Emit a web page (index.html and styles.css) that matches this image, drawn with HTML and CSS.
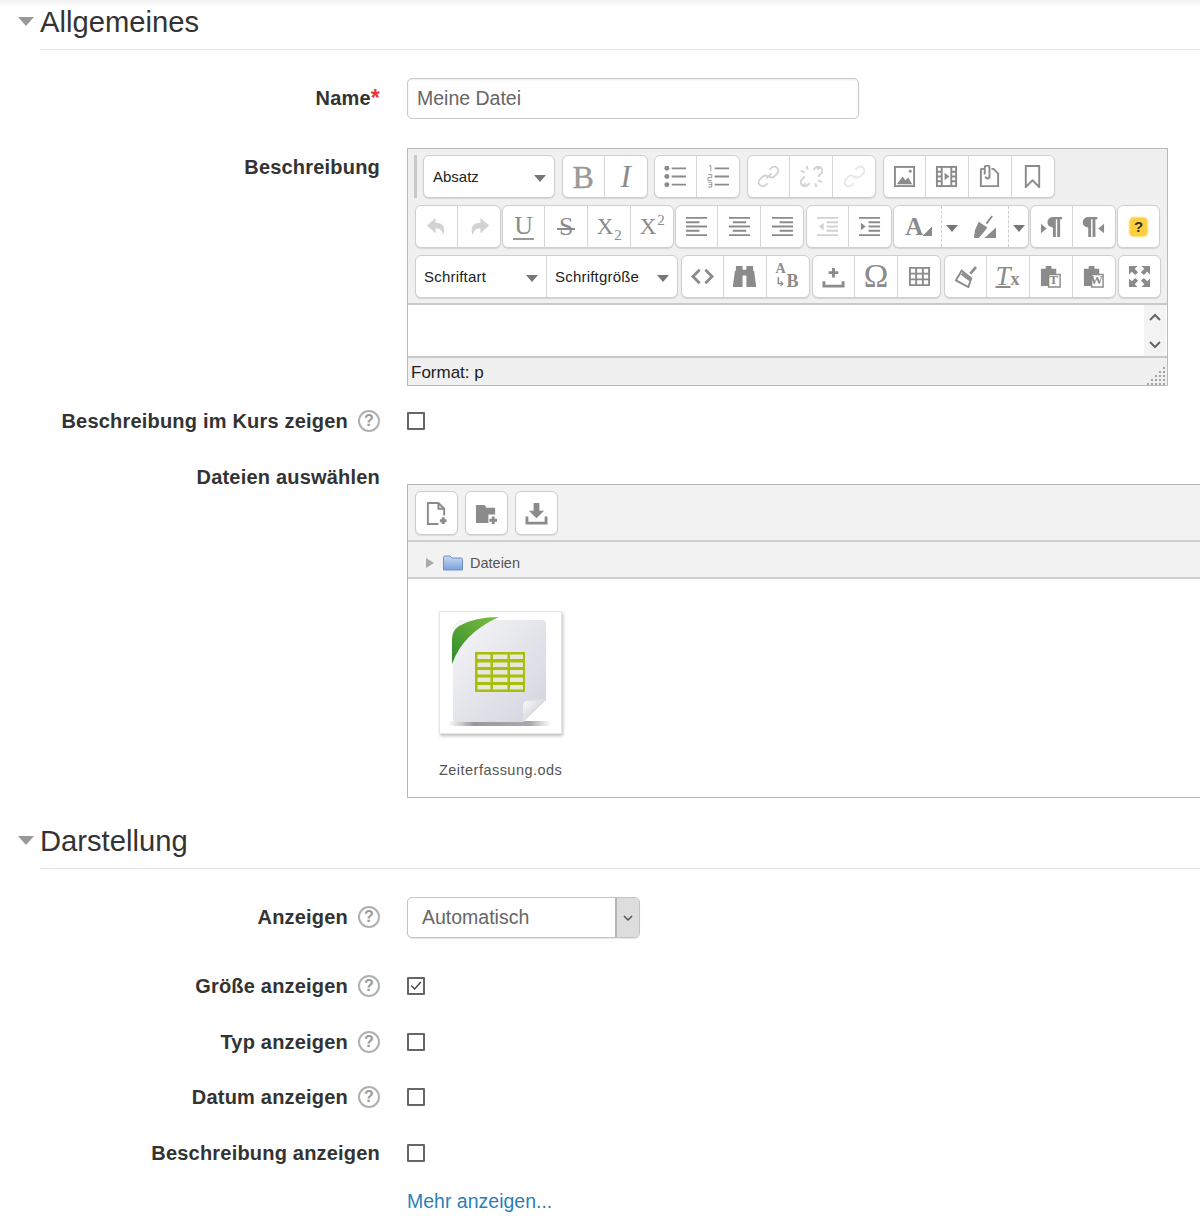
FILE: index.html
```html
<!DOCTYPE html>
<html lang="de">
<head>
<meta charset="utf-8">
<title>Datei</title>
<link rel="stylesheet" href="styles.css">
</head>
<body>
<section class="sec-head"><span class="tri"></span><h2>Allgemeines</h2></section>

<div class="row r-name">
  <div class="lbl p6">Name<span class="req">*</span></div>
  <div class="input">Meine Datei</div>
</div>

<div class="row r-editor">
  <div class="lbl p5">Beschreibung</div>
  <div class="editor">
    <div class="toolbar">
      <div class="tbrow tb1">
        <span class="handle"></span>
        <div class="grp"><div class="drop w130 a10">Absatz<i class="caret"></i></div></div>
        <div class="grp">
          <div class="btn"><span class="g-b">B</span></div>
          <div class="btn"><span class="g-i">I</span></div>
        </div>
        <div class="grp">
          <div class="btn"><svg class="ic" viewBox="0 0 24 24"><circle cx="3" cy="3.5" r="2.6"/><circle cx="3" cy="12" r="2.6"/><circle cx="3" cy="20.5" r="2.6"/><path class="ln" d="M8 3.5h15M8 12h15M8 20.5h15"/></svg></div>
          <div class="btn"><svg class="ic" viewBox="0 0 24 24"><path class="th" d="M2 1l2-.5v6M1 10h4v3H1v3h4M1 18h4v5H1M2 20.500h3"/><path class="ln" d="M8 3.500h15M8 12h15M8 20.500h15"/></svg></div>
        </div>
        <div class="grp off">
          <div class="btn"><svg class="ic" viewBox="0 0 24 24"><path class="ln2" d="M10 14l5-5M13 5l2-2a4 4 0 0 1 6 6l-3 3a4 4 0 0 1-5 0M11 19l-2 2a4 4 0 0 1-6-6l3-3a4 4 0 0 1 5 0"/></svg></div>
          <div class="btn"><svg class="ic" viewBox="0 0 24 24"><path class="ln2" d="M14 5l2-2a4 4 0 0 1 6 6l-3 3M10 19l-2 2a4 4 0 0 1-6-6l3-3M1 6l4 2M7 1l1 4M23 18l-4-2M17 23l-1-4M3 22l3-3M21 2l-3 3"/></svg></div>
          <div class="btn lighter"><svg class="ic" viewBox="0 0 24 24"><path class="ln2" d="M13 5l2-2a4 4 0 0 1 6 6l-3 3a4 4 0 0 1-5 0l-2 2M11 19l-2 2a4 4 0 0 1-6-6l3-3a4 4 0 0 1 5 0"/></svg></div>
        </div>
        <div class="grp">
          <div class="btn"><svg class="ic" viewBox="0 0 24 24"><rect class="ln" x="2" y="2" width="20" height="20"/><path d="M4 20l6-8 3 4 3-3 4 7z"/><circle cx="18" cy="6.500" r="1.500"/></svg></div>
          <div class="btn"><svg class="ic" viewBox="0 0 24 24"><rect class="ln" x="2" y="2" width="20" height="20"/><path class="ln" d="M7 2v20M17 2v20M2 7h5M2 12h5M2 17h5M17 7h5M17 12h5M17 17h5"/><path d="M10 8l5 4-5 4z"/></svg></div>
          <div class="btn"><svg class="ic" viewBox="0 0 24 24"><path class="ln2" d="M3 4h3M14 4h2l5 5v13H3V4M7 10V3a2 2 0 0 1 5 0v9a2 2 0 0 1-4 0"/></svg></div>
          <div class="btn"><svg class="ic" viewBox="0 0 24 24"><path class="ln2" d="M5 1h14v22l-7-7-7 7z"/></svg></div>
        </div>
      </div>
      <div class="tbrow tb2">
        <div class="grp off">
          <div class="btn"><svg class="ic" viewBox="0 0 24 24"><path d="M11 3L2 11l9 8v-5c5 0 7 2 8 7 3-8 0-13-8-13z"/></svg></div>
          <div class="btn"><svg class="ic" viewBox="0 0 24 24"><path d="M13 3l9 8-9 8v-5c-5 0-7 2-8 7-3-8 0-13 8-13z"/></svg></div>
        </div>
        <div class="grp">
          <div class="btn"><span class="g-u">U</span></div>
          <div class="btn"><span class="g-s">S</span></div>
          <div class="btn"><span class="g-x">X<sub>2</sub></span></div>
          <div class="btn"><span class="g-x">X<sup>2</sup></span></div>
        </div>
        <div class="grp">
          <div class="btn"><svg class="ic" viewBox="0 0 24 24"><path class="ln" d="M1 3h22M1 7.500h14M1 12h22M1 16.500h14M1 21h22"/></svg></div>
          <div class="btn"><svg class="ic" viewBox="0 0 24 24"><path class="ln" d="M1 3h22M5 7.500h14M1 12h22M5 16.500h14M1 21h22"/></svg></div>
          <div class="btn"><svg class="ic" viewBox="0 0 24 24"><path class="ln" d="M1 3h22M9 7.500h14M1 12h22M9 16.500h14M1 21h22"/></svg></div>
        </div>
        <div class="grp">
          <div class="btn off"><svg class="ic" viewBox="0 0 24 24"><path class="ln" d="M1 3h22M11 7.500h12M11 12h12M11 16.500h12M1 21h22"/><path d="M8 8v8l-5-4z"/></svg></div>
          <div class="btn"><svg class="ic" viewBox="0 0 24 24"><path class="ln" d="M1 3h22M11 7.500h12M11 12h12M11 16.500h12M1 21h22"/><path d="M3 8v8l5-4z"/></svg></div>
        </div>
        <div class="grp">
          <div class="btn w47"><span class="g-a">A</span><svg class="corner" viewBox="0 0 10 10"><path d="M10 0v10H0z"/></svg></div>
          <div class="split"><i class="caret"></i></div>
          <div class="btn w47 nosep"><svg class="ic" viewBox="0 0 24 24"><path class="ln" d="M14 9l6-8"/><path d="M1 24l1-8 4-9 9 6-3 4-6 7zM24 13v11H12z"/></svg></div>
          <div class="split"><i class="caret"></i></div>
        </div>
        <div class="grp">
          <div class="btn"><svg class="ic" viewBox="0 0 24 24"><path d="M1 9l6 5-6 5zM13 2h10v2.500h-2V23h-3V4.500h-1.500V23h-3V13a5.500 5.500 0 0 1 -.5-11z"/></svg></div>
          <div class="btn"><svg class="ic" viewBox="0 0 24 24"><path d="M23 9l-6 5 6 5zM6 2h10v2.500h-2V23h-3V4.500H9.500V23h-3V13a5.500 5.500 0 0 1-.5-11z"/></svg></div>
        </div>
        <div class="grp">
          <div class="btn"><span class="helpq">?</span></div>
        </div>
      </div>
      <div class="tbrow tb3">
        <div class="grp">
          <div class="drop w130 a9">Schriftart<i class="caret"></i></div>
          <div class="drop w131 a9 sep">Schriftgröße<i class="caret"></i></div>
        </div>
        <div class="grp">
          <div class="btn"><svg class="ic" viewBox="0 0 24 24"><path class="ln3" d="M9 5l-7 7 7 7M15 5l7 7-7 7"/></svg></div>
          <div class="btn"><svg class="ic" viewBox="0 0 24 24"><path d="M3 1h7v4h4V1h7v5h1l2 15v2H14V11h-4v12H0v-2L2 6h1z"/></svg></div>
          <div class="btn"><span class="g-ab"><b class="up">A</b><b class="arr">↳</b><b class="dn">B</b></span></div>
        </div>
        <div class="grp">
          <div class="btn"><svg class="ic" viewBox="0 0 24 24"><path class="ln3" d="M12 3v10M7 8h10"/><path class="ln3" d="M2 17v5h20v-5"/></svg></div>
          <div class="btn"><span class="g-o">Ω</span></div>
          <div class="btn"><svg class="ic" viewBox="0 0 24 24"><path class="ln" d="M2 3h20v18H2zM2 9h20M2 15h20M8.500 3v18M15.500 3v18"/></svg></div>
        </div>
        <div class="grp">
          <div class="btn"><svg class="ic" viewBox="0 0 24 24"><path d="M16 8l6-7 2 2-6 7z"/><path class="ln2" d="M8 6l10 8-3 9L2 16z"/><path d="M9 8l8 6-1 3-9-7z"/></svg></div>
          <div class="btn"><span class="g-tx"><em>T</em><small>x</small></span></div>
          <div class="btn"><svg class="ic" viewBox="0 0 24 24"><path d="M2 4h5V1h6v3h5v6h-7v12H2z"/><path class="pap" d="M10 10h12v13H10z"/></svg><span class="pl">T</span></div>
          <div class="btn"><svg class="ic" viewBox="0 0 24 24"><path d="M2 4h5V1h6v3h5v6h-7v12H2z"/><path class="pap" d="M10 10h12v13H10z"/></svg><span class="pl">W</span></div>
        </div>
        <div class="grp">
          <div class="btn"><svg class="ic" viewBox="0 0 24 24"><path d="M1 1h9L7 4l3.500 3.500-3 3L4 7 1 10zM23 1v9l-3-3-3.500 3.500-3-3L17 4l-3-3zM1 23v-9l3 3 3.500-3.500 3 3L7 20l3 3zM23 23h-9l3-3-3.500-3.500 3-3L20 17l3-3z"/></svg></div>
        </div>
      </div>
    </div>
    <div class="ed-body">
      <div class="scroll">
        <svg class="chev" viewBox="0 0 12 8"><path d="M1 7l5-5 5 5"/></svg>
        <svg class="chev" viewBox="0 0 12 8"><path d="M1 1l5 5 5-5"/></svg>
      </div>
    </div>
    <div class="status">Format: p
      <svg class="grip" viewBox="0 0 20 20"><path d="M16 2h2v2h-2zM16 6h2v2h-2zM12 6h2v2h-2zM16 10h2v2h-2zM12 10h2v2h-2zM8 10h2v2H8zM16 14h2v2h-2zM12 14h2v2h-2zM8 14h2v2H8zM4 14h2v2H4zM16 18h2v2h-2zM12 18h2v2h-2zM8 18h2v2H8zM4 18h2v2H4zM0 18h2v2H0z"/></svg>
    </div>
  </div>
</div>

<div class="row r-show">
  <div class="lbl help">Beschreibung im Kurs zeigen<span class="q">?</span></div>
  <div class="ctl"><span class="check"></span></div>
</div>

<div class="row r-files">
  <div class="lbl">Dateien auswählen</div>
  <div class="fm">
    <div class="fm-tools">
      <div class="fbtn"><svg class="ic" viewBox="0 0 24 24"><path class="ln2" d="M14 23H3V1h11l6 6v7M14 1v6h6"/><path class="ln3" d="M19 16v7M15.500 19.500h7"/></svg></div>
      <div class="fbtn"><svg class="ic" viewBox="0 0 24 24"><path d="M1 3h9l2 3h9v7h-7v9H1z"/><path class="ln3" d="M19 15v8M15 19h8"/></svg></div>
      <div class="fbtn"><svg class="ic" viewBox="0 0 24 24"><path d="M9 1h6v8h5l-8 8-8-8h5z"/><path class="ln3" d="M2 15v7h20v-7"/></svg></div>
    </div>
    <div class="fm-path">
      <i class="pathtri"></i>
      <svg class="folder" viewBox="0 0 20 16"><defs><linearGradient id="fg" x1="0" y1="0" x2="0" y2="1"><stop offset="0" stop-color="#c9dbf5"/><stop offset="1" stop-color="#7c9fdc"/></linearGradient></defs><path fill="url(#fg)" stroke="#6f90c9" d="M.5 2.500Q.5 1 2 1h5l2 2h9q1.500 0 1.500 1.500V15H.5z"/></svg>
      <span>Dateien</span>
    </div>
    <div class="fm-body">
      <div class="file">
        <div class="thumb">
          <svg class="doc" viewBox="0 0 115 115">
            <defs>
              <linearGradient id="dg" x1="0" y1="0" x2="1" y2="1"><stop offset="0" stop-color="#f6f6f8"/><stop offset="1" stop-color="#d2d4de"/></linearGradient>
              <linearGradient id="rg" x1="0" y1="1" x2="1" y2="0"><stop offset="0" stop-color="#2f8a2c"/><stop offset="1" stop-color="#7fbf3f"/></linearGradient>
              <linearGradient id="cg" x1="0" y1="0" x2="1" y2="1"><stop offset="0" stop-color="#fff"/><stop offset="1" stop-color="#b9bbc2"/></linearGradient>
              <linearGradient id="sg" x1="0" y1="0" x2="1" y2="0"><stop offset="0" stop-color="#fff"/><stop offset=".25" stop-color="#999"/><stop offset=".8" stop-color="#aaa"/><stop offset="1" stop-color="#fff"/></linearGradient>
            </defs>
            <path fill="url(#sg)" d="M5 106h103v5H5z"/>
            <path fill="url(#dg)" d="M16 5h83q4 0 4 4v76l-23 22H14q-4 0-4-4V11z"/>
            <path fill="url(#rg)" d="M9 49V24Q9 16 16 11 32 2 56 2 20 18 9 49z"/>
            <path fill="url(#cg)" d="M80 107V91q0-5 5-5q10 0 18-3z"/>
            <rect x="32" y="37" width="50" height="40" fill="#a5bf0a"/>
            <g fill="#e6e8dc">
              <path d="M34.500 39.500h13v4.500h-13zM50 39.500h14.500v4.500H50zM67 39.500h13v4.500H67zM34.500 47.500h13v4.500h-13zM50 47.500h14.500v4.500H50zM67 47.500h13v4.500H67zM34.500 55h13v4.500h-13zM50 55h14.500v4.500H50zM67 55h13v4.500H67zM34.500 62.500h13v4.500h-13zM50 62.500h14.500v4.500H50zM67 62.500h13v4.500H67zM34.500 70h13v4.500h-13zM50 70h14.500v4.500H50zM67 70h13v4.500H67z"/>
            </g>
          </svg>
        </div>
        <div class="fname">Zeiterfassung.ods</div>
      </div>
    </div>
  </div>
</div>

<section class="sec-head sh2"><span class="tri"></span><h2>Darstellung</h2></section>

<div class="row r-disp">
  <div class="lbl p6 help">Anzeigen<span class="q">?</span></div>
  <div class="select"><span class="sel-txt">Automatisch</span><span class="sel-arrow"><svg viewBox="0 0 12 8"><path d="M2 2l4 4 4-4"/></svg></span></div>
</div>
<div class="row r-size">
  <div class="lbl help">Größe anzeigen<span class="q">?</span></div>
  <div class="ctl"><span class="check"><svg viewBox="0 0 16 16"><path d="M2.500 7.500l4 4 7-8"/></svg></span></div>
</div>
<div class="row r-type">
  <div class="lbl help">Typ anzeigen<span class="q">?</span></div>
  <div class="ctl"><span class="check"></span></div>
</div>
<div class="row r-date">
  <div class="lbl help">Datum anzeigen<span class="q">?</span></div>
  <div class="ctl"><span class="check"></span></div>
</div>
<div class="row r-desc">
  <div class="lbl">Beschreibung anzeigen</div>
  <div class="ctl"><span class="check"></span></div>
</div>
<div class="row r-more">
  <div></div>
  <a class="more" href="#">Mehr anzeigen...</a>
</div>
</body>
</html>
```
FILE: styles.css
```css
* { box-sizing: border-box; }
html, body { margin: 0; padding: 0; }
body {
  width: 1200px;
  height: 1225px;
  overflow: hidden;
  font-family: "Liberation Sans", Arial, sans-serif;
  color: #333;
  background: linear-gradient(#f1f1f1, #fff 7px) no-repeat #fff;
}

.sec-head { display: flex; padding-left: 18px; }
.sh2 { margin-top: 21px; }
.tri {
  flex: none; width: 0; height: 0; margin-top: 17px; margin-right: 6px;
  border-left: 8.5px solid transparent;
  border-right: 8.5px solid transparent;
  border-top: 9px solid #999;
}
.sec-head h2 {
  flex: 1; margin: 0; height: 50px;
  font-size: 29.200px; font-weight: 400; line-height: 44px;
  color: #333;
  border-bottom: 1px solid #e5e5e5;
}

.row { display: grid; grid-template-columns: 380px 1fr; column-gap: 27px; align-items: start; }
.lbl {
  text-align: right; font-weight: 700; font-size: 20px; line-height: 28px;
  letter-spacing: .2px; color: #333;
  display: flex; justify-content: flex-end; align-items: center;
}
.p5 { padding-top: 5px; }
.p6 { padding-top: 6px; }
.req { color: #e33; font-weight: 700; font-size: 23px; line-height: 20px; }
.q {
  width: 22px; height: 22px; margin-left: 10px;
  border: 2px solid #b0b0b0; border-radius: 50%;
  color: #9a9a9a; font-size: 16px; line-height: 18px; font-weight: 700;
  text-align: center; letter-spacing: 0;
}

.r-name { margin-top: 28px; }
.r-editor { margin-top: 29px; }
.r-show { margin-top: 21px; }
.r-files { margin-top: 28px; }
.r-disp { margin-top: 28px; }
.r-size { margin-top: 34px; }
.r-type { margin-top: 28px; }
.r-date { margin-top: 27px; }
.r-desc { margin-top: 28px; }
.r-more { margin-top: 20px; }

.input {
  width: 452px; height: 41px; padding-left: 9px;
  border: 1px solid #c8c8c8; border-radius: 5px;
  box-shadow: inset 0 1px 2px rgba(0,0,0,.08);
  font-size: 19.500px; line-height: 39px; color: #666;
}

.editor { width: 761px; border: 1px solid #b9b9b9; background: #f0f0f0; }
.toolbar { height: 156px; padding: 6px 0 0 7px; border-bottom: 2px solid #c9c9c9; }
.tbrow { display: flex; height: 43px; margin-bottom: 7px; }
.tb1 { gap: 6.700px; }
.tb2 { gap: 1.200px; }
.tb3 { gap: 2.500px; }
.handle { width: 3px; height: 43px; background: #c9c9c9; margin-left: -1px; margin-right: -.7px; }

.grp {
  display: flex; height: 43px;
  background: #fff; border: 1px solid #cfcfcf; border-radius: 6px;
  box-shadow: 0 1px 1px rgba(0,0,0,.12);
}
.btn {
  position: relative; width: 43px; height: 100%;
  display: flex; align-items: center; justify-content: center;
  border-left: 1px solid #d6d6d6; color: #8b8b8b; fill: #8b8b8b; stroke: #8b8b8b;
}
.btn:first-child, .nosep { border-left: 0; }
.btn:first-child { width: 41px; }
.btn.w47 { width: 47px; }
.off .btn, .btn.off { color: #d2d2d2; fill: #d2d2d2; stroke: #d2d2d2; }
.off .btn.lighter { color: #e8e8e8; fill: #e8e8e8; stroke: #e8e8e8; }

.ic { width: 23px; height: 23px; stroke-width: 0; }
.ln { fill: none; stroke-width: 2; }
.ln2 { fill: none; stroke-width: 2; }
.ln3 { fill: none; stroke-width: 3; }
.th { fill: none; stroke-width: .9; }

.drop {
  position: relative; height: 100%;
  font-size: 15px; line-height: 41px; color: #222;
}
.w130 { width: 130px; }
.w131 { width: 131px; }
.a10 { padding-left: 9px; }
.a9 { padding-left: 8px; letter-spacing: .2px; }
.sep { border-left: 1px solid #d6d6d6; }
.caret {
  position: absolute; right: 8px; top: 19px; width: 0; height: 0;
  border-left: 6.500px solid transparent; border-right: 6.500px solid transparent;
  border-top: 7px solid #777;
}
.split { position: relative; width: 20px; border-left: 1px dashed #ccc; }
.split .caret { right: 3px; }

.g-b, .g-i, .g-u, .g-s, .g-x, .g-o, .g-a, .g-tx em {
  font-family: "Liberation Serif", "Times New Roman", serif;
}
.g-b { font-size: 32px; font-weight: 400; color: #999; line-height: 1; -webkit-text-stroke: .4px #999; }
.g-i { font-size: 31px; font-style: italic; line-height: 1; }
.g-u { font-size: 26px; line-height: 24px; border-bottom: 2px solid #999; padding: 0 1px; }
.g-s {
  font-size: 26px; line-height: 26px;
  background: linear-gradient(#8b8b8b, #8b8b8b) center 62% / 100% 2px no-repeat;
  padding: 0 2px;
}
.g-x { font-size: 23px; line-height: 1; }
.g-x sub, .g-x sup { font-size: 15px; line-height: 0; margin-left: 1px; }
.g-a { font-size: 25px; font-weight: 700; margin-right: 6px; }
.corner { position: absolute; right: 9px; bottom: 11px; width: 9px; height: 9px; }
.g-o { font-size: 33px; line-height: 1; }
.helpq {
  width: 17px; height: 18px; border-radius: 4px;
  background: #fbcf3d; box-shadow: 0 0 2px 1px #f8d772;
  color: #333; font-weight: 700; font-size: 15px; line-height: 18px; text-align: center;
}
.g-ab { position: relative; width: 24px; height: 26px; font-family: "Liberation Serif", serif; }
.g-ab b { position: absolute; font-weight: 700; line-height: 1; }
.g-ab .up { left: 0; top: -2px; font-size: 14px; }
.g-ab .arr { left: 0; top: 12px; font-size: 12px; font-family: "DejaVu Sans", sans-serif; }
.g-ab .dn { left: 11px; top: 8px; font-size: 18px; }
.g-tx { font-family: "Liberation Serif", serif; line-height: 1; }
.g-tx em { font-size: 27px; text-decoration: underline; text-decoration-thickness: 2px; }
.g-tx small { font-size: 18px; font-weight: 700; font-family: "Liberation Serif", serif; }
.pap { fill: #fff; stroke-width: 1.500; }
.pl {
  position: absolute; left: 17px; top: 17px; width: 14px;
  font-family: "Liberation Serif", serif; font-size: 13px; font-weight: 700; line-height: 14px; text-align: center;
}

.ed-body { height: 51px; background: #fff; display: flex; justify-content: flex-end; padding-right: 1px; }
.scroll {
  width: 22px; background: #f3f3f3;
  display: flex; flex-direction: column; align-items: center; justify-content: space-between;
  padding: 8px 0 7px;
}
.chev { width: 12px; height: 8px; fill: none; stroke: #666; stroke-width: 2; }
.status {
  position: relative; height: 29px; padding-left: 3px;
  border-top: 2px solid #c9c9c9;
  font-size: 17px; line-height: 29px; color: #222;
}
.grip { position: absolute; right: 0; bottom: 0; width: 20px; height: 20px; fill: #a3a3a3; }

.ctl { padding-top: 5px; }
.check {
  display: block; width: 18px; height: 18px;
  border: 2px solid #666; border-radius: 1px; background: #fff;
}
.check svg { display: block; width: 14px; height: 14px; fill: none; stroke: #444; stroke-width: 1.600; }

.fm {
  margin-top: 21px; height: 314px;
  border: 1px solid #b4b4b4; border-right: 0;
  background: #fff;
}
.fm-tools {
  display: flex; gap: 7px; height: 57px; padding: 6px 0 0 7px;
  background: #f2f2f2; border-bottom: 2px solid #cfcfcf;
}
.fbtn {
  width: 43px; height: 44px; display: flex; align-items: center; justify-content: center;
  background: #fff; border: 1px solid #ccc; border-radius: 6px;
  box-shadow: 0 1px 1px rgba(0,0,0,.1);
  fill: #8b8b8b; stroke: #8b8b8b;
}
.fm-path {
  display: flex; align-items: center; height: 37px; padding: 6px 0 0 18px;
  background: #f2f2f2; border-bottom: 2px solid #cfcfcf;
  font-size: 14.500px; color: #555;
}
.pathtri {
  width: 0; height: 0; margin-right: 9px;
  border-top: 5px solid transparent; border-bottom: 5px solid transparent;
  border-left: 8px solid #aaa;
}
.folder { width: 20px; height: 16px; margin-right: 7px; }
.fm-body { padding: 32px 0 0 31px; }
.file { width: 124px; }
.thumb {
  width: 123px; height: 123px; background: #fff;
  border: 1px solid #e6e6e6; box-shadow: 1px 2px 3px rgba(0,0,0,.25);
  padding: 3px 0 0 3px;
}
.doc { display: block; width: 115px; height: 115px; }
.fname { margin-top: 27px; font-size: 14.500px; line-height: 18px; letter-spacing: .47px; color: #555; white-space: nowrap; }

.select {
  display: flex; width: 233px; height: 41px;
  border: 1px solid #c4c4c4; border-radius: 5px; background: #fff;
  box-shadow: 0 1px 1px rgba(0,0,0,.1);
  overflow: hidden;
}
.sel-txt { flex: 1; padding-left: 14px; font-size: 19.500px; line-height: 39px; color: #666; }
.sel-arrow {
  width: 24px; background: #ddd; border-left: 2px solid #b5b5b5;
  display: flex; align-items: center; justify-content: center;
}
.sel-arrow svg { width: 12px; height: 8px; fill: none; stroke: #555; stroke-width: 1.500; }

.more { font-size: 19.500px; line-height: 28px; color: #2a7fb8; text-decoration: none; }
```
